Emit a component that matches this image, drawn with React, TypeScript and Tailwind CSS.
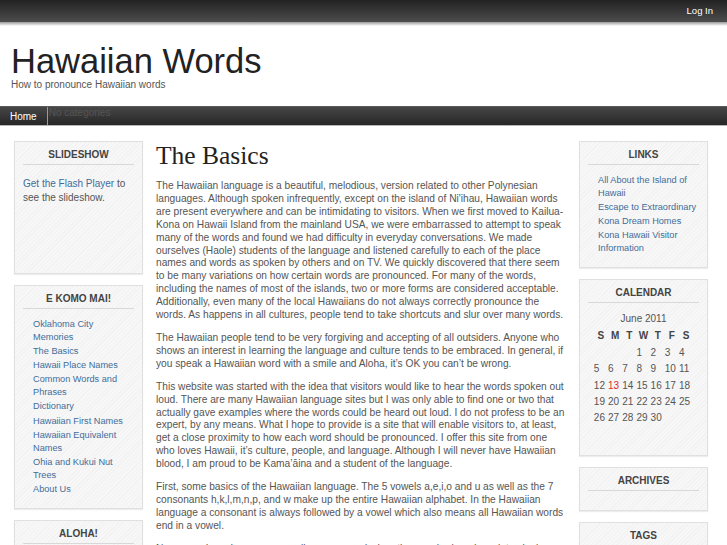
import type { ReactNode } from "react";

function Box({ title, children }: { title: string; children?: ReactNode }) {
  return (
    <div className="border border-[#e0e0e0] bg-[repeating-linear-gradient(135deg,#f7f7f7_0px,#f7f7f7_2px,#f2f2f2_2px,#f2f2f2_3px)] px-[8px] shadow-[0_1px_1px_rgba(0,0,0,0.07)]">
      <h3 className="border-b border-[#d8d8d8] pt-[6px] pb-[2px] text-center text-[10px] font-bold leading-[14px] text-[#444]">
        {title}
      </h3>
      {children}
    </div>
  );
}

function LinkList({ items, extra }: { items: string[]; extra?: string }) {
  return (
    <ul className={`mt-[9px] pb-[11px] pl-[10px] text-[9.2px] leading-[12.8px] text-[#3f6d9a] ${extra ?? ""}`}>
      {items.map((it) => (
        <li key={it} className="pb-[1.4px]">
          {it}
        </li>
      ))}
    </ul>
  );
}

const weeks: (number | null)[][] = [
  [null, null, null, 1, 2, 3, 4],
  [5, 6, 7, 8, 9, 10, 11],
  [12, 13, 14, 15, 16, 17, 18],
  [19, 20, 21, 22, 23, 24, 25],
  [26, 27, 28, 29, 30, null, null],
];

const paragraphs = [
  "The Hawaiian language is a beautiful, melodious, version related to other Polynesian languages. Although spoken infrequently, except on the island of Ni'ihau, Hawaiian words are present everywhere and can be intimidating to visitors. When we first moved to Kailua-Kona on Hawaii Island from the mainland USA, we were embarrassed to attempt to speak many of the words and found we had difficulty in everyday conversations. We made ourselves (Haole) students of the language and listened carefully to each of the place names and words as spoken by others and on TV. We quickly discovered that there seem to be many variations on how certain words are pronounced. For many of the words, including the names of most of the islands, two or more forms are considered acceptable. Additionally, even many of the local Hawaiians do not always correctly pronounce the words. As happens in all cultures, people tend to take shortcuts and slur over many words.",
  "The Hawaiian people tend to be very forgiving and accepting of all outsiders. Anyone who shows an interest in learning the language and culture tends to be embraced. In general, if you speak a Hawaiian word with a smile and Aloha, it\u2019s OK you can\u2019t be wrong.",
  "This website was started with the idea that visitors would like to hear the words spoken out loud. There are many Hawaiian language sites but I was only able to find one or two that actually gave examples where the words could be heard out loud. I do not profess to be an expert, by any means. What I hope to provide is a site that will enable visitors to, at least, get a close proximity to how each word should be pronounced. I offer this site from one who loves Hawaii, it\u2019s culture, people, and language. Although I will never have Hawaiian blood, I am proud to be Kama\u2019\u0101ina and a student of the language.",
  "First, some basics of the Hawaiian language. The 5 vowels a,e,i,o and u as well as the 7 consonants h,k,l,m,n,p, and w make up the entire Hawaiian alphabet. In the Hawaiian language a consonant is always followed by a vowel which also means all Hawaiian words end in a vowel.",
  "Names and words are more easily pronounced when they are broken down into single syllables.",
];

export default function App() {
  return (
    <div className="h-[545px] w-[727px] overflow-hidden bg-white font-['Liberation_Sans',Arial,sans-serif] text-[#555]">
      {/* top bar */}
      <div className="flex h-[22px] items-center justify-end bg-gradient-to-b from-[#222] to-[#4d4d4d] pr-[14px]">
        <span className="text-[9.5px] text-white">Log In</span>
      </div>
      <div className="h-[4px] bg-gradient-to-b from-[#9a9a9a] to-white" />

      {/* header */}
      <div className="h-[80px] px-[11px] pt-[17px]">
        <h1 className="text-[34.5px] leading-[36px] text-[#222]">Hawaiian Words</h1>
        <p className="-mt-px text-[10px] leading-[14px] text-[#555]">How to pronounce Hawaiian words</p>
      </div>

      {/* nav */}
      <div className="flex h-[20px] border-t border-[#5a5a5a] border-b border-b-[#b5b5b5] bg-gradient-to-b from-[#474747] to-[#262626]">
        <div className="flex items-center border-r border-[#9a9a9a] px-[10px] text-[10px] text-white">Home</div>
        <div className="pl-[1px] text-[10px] leading-[11px] text-[#555]">No categories</div>
      </div>

      {/* body */}
      <div className="mt-[15px] flex gap-[13px] pl-[14px]">
        {/* left sidebar */}
        <div className="flex w-[129px] shrink-0 flex-col gap-[11px]">
          <div className="h-[133px] border border-[#e0e0e0] bg-[repeating-linear-gradient(135deg,#f7f7f7_0px,#f7f7f7_2px,#f2f2f2_2px,#f2f2f2_3px)] px-[8px] shadow-[0_1px_1px_rgba(0,0,0,0.07)]">
            <h3 className="border-b border-[#d8d8d8] pt-[6px] pb-[2px] text-center text-[10px] font-bold leading-[14px] text-[#444]">
              SLIDESHOW
            </h3>
            <p className="mt-[12px] text-[10px] leading-[14px]">
              <span className="text-[#3f6d9a]">Get the Flash Player</span> to see the slideshow.
            </p>
          </div>
          <Box title="E KOMO MAI!">
            <LinkList
              extra="pr-[3px]"
              items={[
                "Oklahoma City Memories",
                "The Basics",
                "Hawaii Place Names",
                "Common Words and Phrases",
                "Dictionary",
                "Hawaiian First Names",
                "Hawaiian Equivalent Names",
                "Ohia and Kukui Nut Trees",
                "About Us",
              ]}
            />
          </Box>
          <Box title="ALOHA!">
            <div className="h-[40px]" />
          </Box>
        </div>

        {/* main */}
        <div className="w-[410px] shrink-0">
          <h2 className="mt-[1px] font-['Liberation_Serif','Times_New_Roman',serif] text-[25.5px] leading-[28px] text-[#222]">
            The Basics
          </h2>
          <div className="mt-[10px] text-[10.2px] leading-[12.9px]">
            {paragraphs.map((p, i) => (
              <p key={i} className="mb-[10px]">
                {p}
              </p>
            ))}
          </div>
        </div>

        {/* right sidebar */}
        <div className="flex w-[129px] shrink-0 flex-col gap-[11px]">
          <Box title="LINKS">
            <LinkList
              items={[
                "All About the Island of Hawaii",
                "Escape to Extraordinary",
                "Kona Dream Homes",
                "Kona Hawaii Visitor Information",
              ]}
            />
          </Box>
          <Box title="CALENDAR">
            <div className="pb-[29px]">
              <div className="mt-[9px] text-center text-[10px] leading-[14px]">June 2011</div>
              <table className="mx-auto mt-[1px] border-collapse text-[10px]">
                <thead>
                  <tr>
                    {["S", "M", "T", "W", "T", "F", "S"].map((d, i) => (
                      <th key={i} className="h-[17px] w-[14.2px] p-0 text-center font-bold text-[#444]">
                        {d}
                      </th>
                    ))}
                  </tr>
                </thead>
                <tbody>
                  {weeks.map((w, wi) => (
                    <tr key={wi}>
                      {w.map((d, di) => (
                        <td
                          key={di}
                          className={`h-[16.3px] w-[14.2px] p-0 text-left ${d === 13 ? "text-[#e0282b]" : "text-[#555]"}`}
                        >
                          {d ?? ""}
                        </td>
                      ))}
                    </tr>
                  ))}
                </tbody>
              </table>
            </div>
          </Box>
          <Box title="ARCHIVES">
            <div className="h-[19px]" />
          </Box>
          <Box title="TAGS">
            <div className="h-[40px]" />
          </Box>
        </div>
      </div>
    </div>
  );
}
